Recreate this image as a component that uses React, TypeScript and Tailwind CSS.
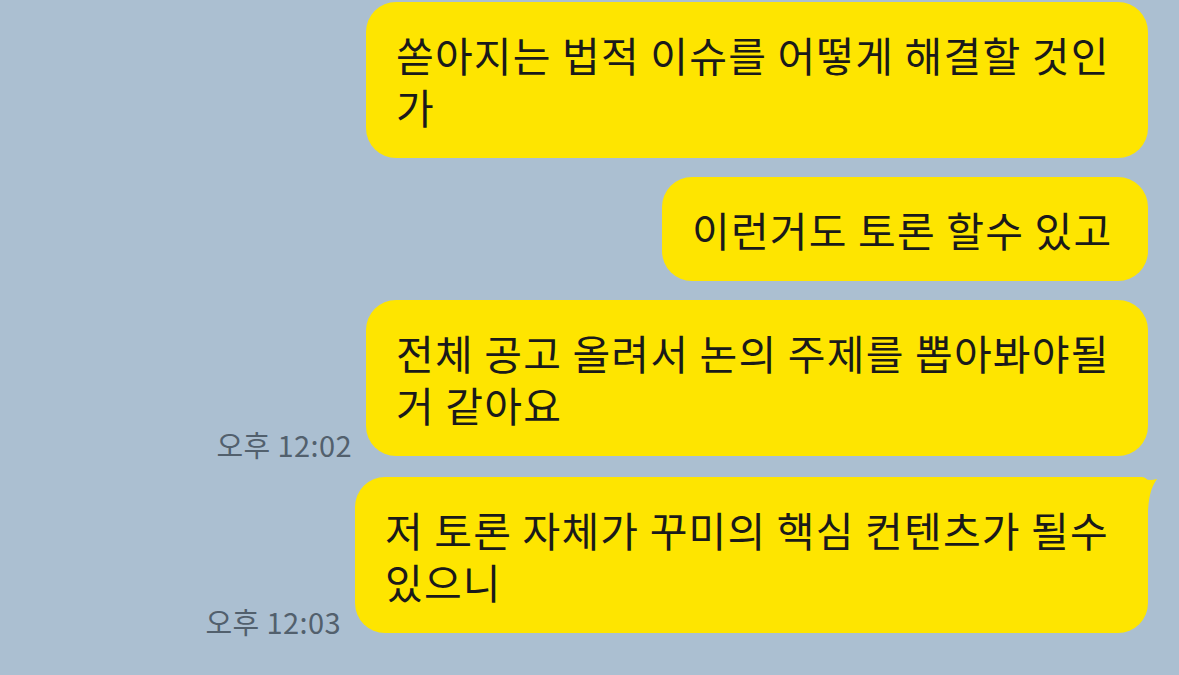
const font = "font-['Noto_Sans_CJK_KR','Noto_Sans',sans-serif]"

type Msg = {
  lines: string[]
  width: string
  time?: string
  tail?: boolean
  gap: string
}

const messages: Msg[] = [
  { lines: ['쏟아지는 법적 이슈를 어떻게 해결할 것인', '가'], width: 'w-[782px]', gap: 'mt-0' },
  { lines: ['이런거도 토론 할수 있고'], width: 'w-[486px]', gap: 'mt-[19px]' },
  {
    lines: ['전체 공고 올려서 논의 주제를 뽑아봐야될', '거 같아요'],
    width: 'w-[782px]',
    time: '오후 12:02',
    gap: 'mt-[19px]',
  },
  {
    lines: ['저 토론 자체가 꾸미의 핵심 컨텐츠가 될수', '있으니'],
    width: 'w-[793px]',
    time: '오후 12:03',
    tail: true,
    gap: 'mt-[21px]',
  },
]

function Tail() {
  return (
    <svg
      className="absolute -right-[10px] top-0"
      width="30"
      height="34"
      viewBox="0 0 30 34"
    >
      <path d="M0 0 H12 C17 3 22 4 29 2 C25 8 21 15 20 34 H0 Z" fill="#fee500" />
    </svg>
  )
}

function Bubble({ msg }: { msg: Msg }) {
  return (
    <div className={`flex items-end justify-end gap-[14px] ${msg.gap}`}>
      {msg.time && (
        <span className="text-[29px] leading-[34px] tracking-[0.4px] text-[#52606d] whitespace-nowrap mb-[-5px]">
          {msg.time}
        </span>
      )}
      <div
        className={`relative ${msg.width} bg-[#fee500] rounded-[30px] ${
          msg.tail ? 'rounded-tr-[6px]' : ''
        } pl-[30px] py-[26px] text-[41px] leading-[52px] tracking-[1.2px] text-[#1a1a1a] whitespace-nowrap`}
      >
        {msg.tail && <Tail />}
        {msg.lines.map((l, i) => (
          <div key={i}>{l}</div>
        ))}
      </div>
    </div>
  )
}

export default function App() {
  return (
    <div className={`w-[1179px] h-[675px] overflow-hidden bg-[#abbfd1] ${font}`}>
      <div className="flex flex-col items-end pt-[2px] pr-[31px]">
        {messages.map((m, i) => (
          <Bubble key={i} msg={m} />
        ))}
      </div>
    </div>
  )
}
